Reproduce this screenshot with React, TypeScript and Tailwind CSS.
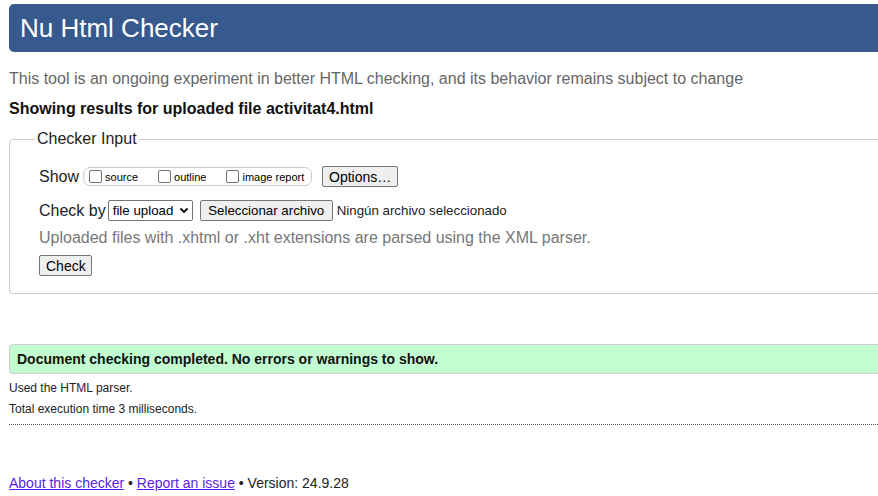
import React from "react";

const font = { fontFamily: '"Liberation Sans", Arial, sans-serif' } as React.CSSProperties;

function Btn({ children, className = "" }: { children: React.ReactNode; className?: string }) {
  return (
    <button
      className={
        "bg-[#efefef] border border-[#767676] rounded-[2px] text-[13.3px] leading-none text-black px-[6px] " +
        className
      }
      style={font}
    >
      {children}
    </button>
  );
}

function Check({ label }: { label: string }) {
  return (
    <label className="flex items-center">
      <span className="w-[13px] h-[13px] border border-[#767676] rounded-[2px] bg-white mr-[3px]" />
      <span className="text-[11px] leading-none text-black mt-[2px]">{label}</span>
    </label>
  );
}

export default function App() {
  return (
    <div className="w-[878px] h-[496px] overflow-hidden bg-white" style={font}>
      <div className="w-[1100px] pl-[9px] pt-[4px]">
        <div className="h-[48px] bg-[#365a8e] rounded-[5px] flex items-center pl-[11px]">
          <h1 className="text-white text-[26px] leading-none font-normal">Nu Html Checker</h1>
        </div>

        <p className="mt-[17px] text-[16px] leading-[20px] text-[#666]">
          This tool is an ongoing experiment in better HTML checking, and its behavior remains subject to change
        </p>
        <p className="mt-[10px] text-[16px] leading-[20px] font-bold text-[#111]">
          Showing results for uploaded file activitat4.html
        </p>

        <fieldset className="mt-[11px] border border-[#ccc] rounded-[4px] pl-[29px] pb-[15px] pt-[0px]">
          <legend className="-ml-[4px] px-[2px] text-[16px] leading-[18px] text-[#222]">Checker Input</legend>

          <div className="mt-[18px] flex items-center h-[21px]">
            <span className="text-[16px] leading-none text-[#222]">Show</span>
            <div className="ml-[4px] h-[19px] w-[229px] border border-[#ccc] rounded-[7px] flex items-center pl-[5px] gap-[20px]">
              <Check label="source" />
              <Check label="outline" />
              <Check label="image report" />
            </div>
            <Btn className="ml-[10px] h-[21px] w-[76px] text-[14px]">Options…</Btn>
          </div>

          <div className="mt-[13px] flex items-center h-[21px]">
            <span className="text-[16px] leading-none text-[#222]">Check by</span>
            <div className="ml-[2px] h-[21px] w-[85px] border border-[#767676] rounded-[2px] flex items-center pl-[4px] pr-[3px] justify-between bg-white">
              <span className="text-[13.3px] leading-none text-black">file upload</span>
              <svg width="10" height="7" viewBox="0 0 10 7">
                <path d="M1.5 1.5 L5 5 L8.5 1.5" fill="none" stroke="#000" strokeWidth="1.8" />
              </svg>
            </div>
            <Btn className="ml-[7px] h-[21px] w-[133px]">Seleccionar archivo</Btn>
            <span className="ml-[4px] text-[13.3px] leading-none text-[#222]">Ningún archivo seleccionado</span>
          </div>

          <p className="mt-[7px] text-[16px] leading-[20px] text-[#777]">
            Uploaded files with .xhtml or .xht extensions are parsed using the XML parser.
          </p>

          <Btn className="mt-[7px] h-[21px] w-[53px] text-[14px]">Check</Btn>
        </fieldset>

        <div className="mt-[50px] h-[30px] bg-[#c2fdd0] border border-[#ccc] rounded-[4px] flex items-center pl-[7px]">
          <span className="text-[14px] leading-none font-bold text-[#111]">
            Document checking completed. No errors or warnings to show.
          </span>
        </div>

        <p className="mt-[7px] text-[12px] leading-[14px] text-[#222]">Used the HTML parser.</p>
        <p className="mt-[7px] text-[12px] leading-[14px] text-[#222]">Total execution time 3 milliseconds.</p>

        <div className="mt-[8px] border-t border-dotted border-[#555]" />

        <p className="mt-[50px] text-[14px] leading-[16px] text-[#222]">
          <a className="text-[#5a1ee6] underline" href="#">About this checker</a>
          {" • "}
          <a className="text-[#5a1ee6] underline" href="#">Report an issue</a>
          {" • Version: 24.9.28"}
        </p>
      </div>
    </div>
  );
}
